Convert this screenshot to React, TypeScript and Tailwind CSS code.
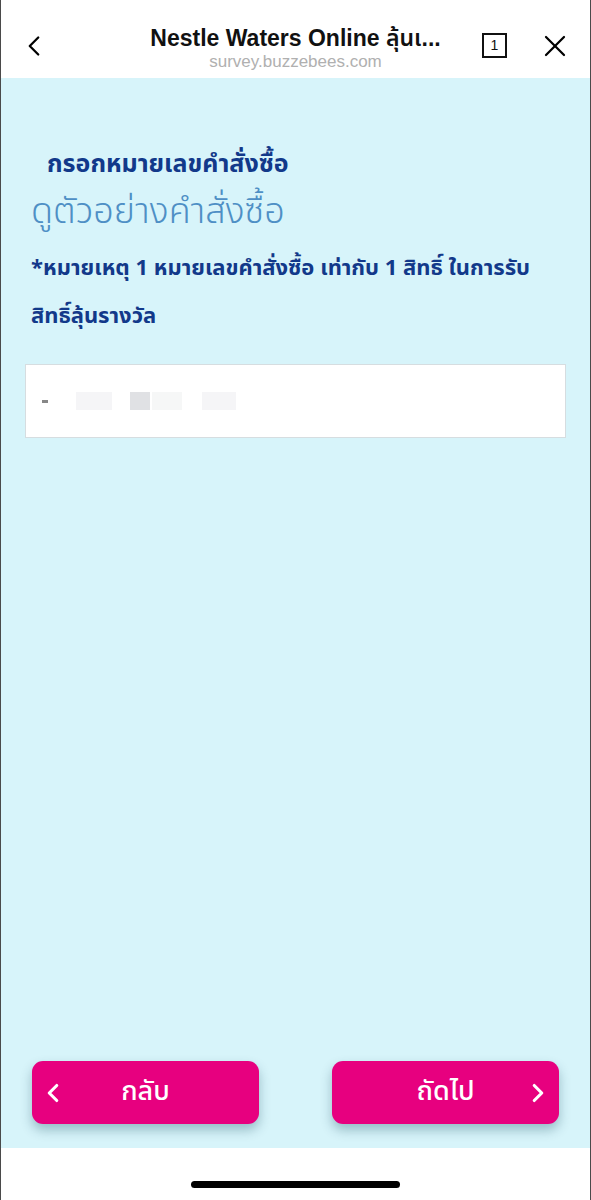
import { ChevronLeft, ChevronRight, X } from 'lucide-react'

const thai = { fontFamily: '"Noto Sans Thai", "Noto Sans", "Liberation Sans", sans-serif' }
const latin = { fontFamily: '"Liberation Sans", "Noto Sans Thai", sans-serif' }

export default function App() {
  return (
    <div className="flex h-[1200px] w-[591px] flex-col border-x border-[#4a4a4a] bg-white" style={thai}>
      {/* browser header */}
      <header className="relative flex h-[78px] shrink-0 items-start">
        <ChevronLeft className="absolute left-[16px] top-[29px] h-[34px] w-[34px] text-black" strokeWidth={1.6} />
        <div className="mx-auto flex flex-col items-center pt-[25px]">
          <div className="text-[23px] font-semibold leading-[26px] text-[#111]" style={latin}>Nestle Waters Online ลุ้นเ...</div>
          <div className="mt-[1px] text-[17px] leading-[20px] text-[#b0b0b0]" style={latin}>survey.buzzebees.com</div>
        </div>
        <div className="absolute left-[481px] top-[33px] flex h-[25px] w-[25px] items-center justify-center border-[2px] border-[#111] text-[14px] text-[#111]" style={latin}>1</div>
        <X className="absolute left-[536px] top-[28px] h-[36px] w-[36px] text-black" strokeWidth={1.5} />
      </header>

      {/* survey body */}
      <main className="flex flex-1 flex-col bg-[#d7f4fa] px-[24px]">
        <h1 className="mt-[70px] pl-[22px] text-[25px] font-bold leading-[33px] text-[#12398a]">กรอกหมายเลขคำสั่งซื้อ</h1>
        <p className="mt-[8px] pl-[6px] text-[36px] font-light leading-[46px] text-[#4e8fc5]">ดูตัวอย่างคำสั่งซื้อ</p>
        <p className="mt-[10px] pl-[6px] text-[22px] font-bold leading-[48px] text-[#12398a]">
          *หมายเหตุ 1 หมายเลขคำสั่งซื้อ เท่ากับ 1 สิทธิ์ ในการรับ
          <br />
          สิทธิ์ลุ้นรางวัล
        </p>
        <div className="mt-[23px] flex h-[74px] items-center border border-[#d6dde0] bg-white pl-[16px]">
          <div className="flex items-center gap-[2px] opacity-70">
            <span className="h-[3px] w-[6px] bg-[#555]" />
            <span className="ml-[26px] h-[18px] w-[36px] bg-[#f1f2f4]" />
            <span className="ml-[16px] h-[18px] w-[20px] bg-[#d4d5d9]" />
            <span className="h-[18px] w-[30px] bg-[#f3f4f5]" />
            <span className="ml-[18px] h-[18px] w-[34px] bg-[#f1f2f4]" />
          </div>
        </div>

        <div className="mt-auto mb-[24px] flex justify-between px-[7px]">
          <button className="relative flex h-[63px] w-[227px] items-center justify-center rounded-[11px] bg-[#e7007f] text-[27px] font-medium text-white shadow-[0_6px_12px_rgba(0,60,80,0.3)]">
            <ChevronLeft className="absolute left-[6px] h-[30px] w-[30px]" strokeWidth={2.5} />
            กลับ
          </button>
          <button className="relative flex h-[63px] w-[227px] items-center justify-center rounded-[11px] bg-[#e7007f] text-[27px] font-medium text-white shadow-[0_6px_12px_rgba(0,60,80,0.3)]">
            ถัดไป
            <ChevronRight className="absolute right-[6px] h-[30px] w-[30px]" strokeWidth={2.5} />
          </button>
        </div>
      </main>

      {/* home indicator */}
      <div className="flex h-[52px] shrink-0 items-start justify-center pt-[33px]">
        <div className="h-[7px] w-[209px] rounded-full bg-black" />
      </div>
    </div>
  )
}
